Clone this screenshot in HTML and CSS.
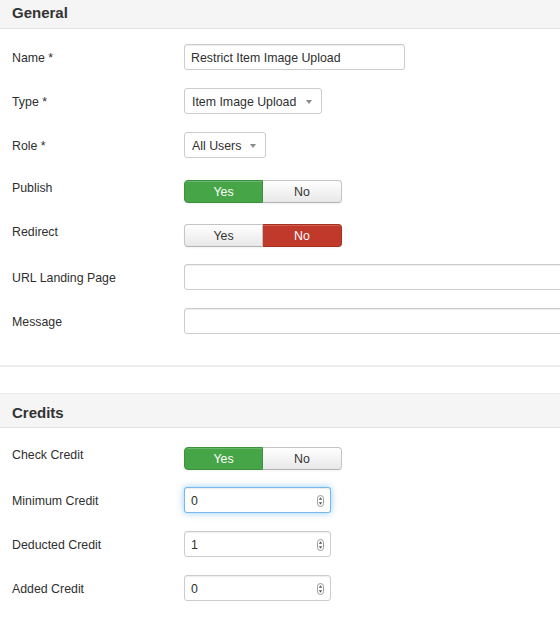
FILE: index.html
```html
<!DOCTYPE html>
<html>
<head>
<meta charset="utf-8">
<link rel="stylesheet" href="styles.css">
</head>
<body>
<div class="page">
  <fieldset class="panel panel-general">
    <div class="legend">General</div>
    <div class="fields">
      <div class="row">
        <label class="label">Name *</label>
        <div class="input input-name"><span class="value">Restrict Item Image Upload</span></div>
      </div>
      <div class="row">
        <label class="label">Type *</label>
        <div class="select select-type"><span class="value">Item Image Upload</span><span class="caret"></span></div>
      </div>
      <div class="row">
        <label class="label">Role *</label>
        <div class="select select-role"><span class="value">All Users</span><span class="caret"></span></div>
      </div>
      <div class="row">
        <label class="label label-btn">Publish</label>
        <div class="btn-group">
          <span class="btn btn-success">Yes</span>
          <span class="btn">No</span>
        </div>
      </div>
      <div class="row">
        <label class="label label-btn">Redirect</label>
        <div class="btn-group">
          <span class="btn">Yes</span>
          <span class="btn btn-danger">No</span>
        </div>
      </div>
      <div class="row">
        <label class="label">URL Landing Page</label>
        <div class="input input-wide"></div>
      </div>
      <div class="row">
        <label class="label">Message</label>
        <div class="input input-wide"></div>
      </div>
    </div>
  </fieldset>

  <fieldset class="panel panel-credits">
    <div class="legend">Credits</div>
    <div class="fields">
      <div class="row">
        <label class="label label-btn">Check Credit</label>
        <div class="btn-group">
          <span class="btn btn-success">Yes</span>
          <span class="btn">No</span>
        </div>
      </div>
      <div class="row">
        <label class="label">Minimum Credit</label>
        <div class="input input-number is-focused"><span class="value">0</span>
          <svg class="spin" width="7" height="12" viewBox="0 0 7 12"><rect x="0.5" y="0.5" width="6" height="11" rx="3" fill="#fff" stroke="#9a9a9a"/><path d="M3.5 2.3 L5.2 4.8 H1.8Z" fill="#555"/><path d="M3.5 9.7 L5.2 7.2 H1.8Z" fill="#555"/></svg>
        </div>
      </div>
      <div class="row">
        <label class="label">Deducted Credit</label>
        <div class="input input-number"><span class="value">1</span>
          <svg class="spin" width="7" height="12" viewBox="0 0 7 12"><rect x="0.5" y="0.5" width="6" height="11" rx="3" fill="#fff" stroke="#9a9a9a"/><path d="M3.5 2.3 L5.2 4.8 H1.8Z" fill="#555"/><path d="M3.5 9.7 L5.2 7.2 H1.8Z" fill="#555"/></svg>
        </div>
      </div>
      <div class="row">
        <label class="label">Added Credit</label>
        <div class="input input-number"><span class="value">0</span>
          <svg class="spin" width="7" height="12" viewBox="0 0 7 12"><rect x="0.5" y="0.5" width="6" height="11" rx="3" fill="#fff" stroke="#9a9a9a"/><path d="M3.5 2.3 L5.2 4.8 H1.8Z" fill="#555"/><path d="M3.5 9.7 L5.2 7.2 H1.8Z" fill="#555"/></svg>
        </div>
      </div>
    </div>
  </fieldset>
</div>
</body>
</html>
```

FILE: styles.css
```css
html, body {
  margin: 0;
  padding: 0;
  background: #fff;
}
body {
  font-family: "Liberation Sans", Arial, Helvetica, sans-serif;
  font-size: 12.35px;
  color: #2f2f2f;
  overflow: hidden;
}
.page {
  width: 560px;
  overflow: hidden;
}
.panel {
  margin: 0;
  padding: 0;
  border: 0;
  min-width: 0;
}
.panel-general {
  margin-top: -6px;
  border-bottom: 2px solid #ececec;
}
.panel-credits {
  margin-top: 26px;
}
.legend {
  height: 34px;
  line-height: 37px;
  padding-left: 12px;
  background: #f5f5f5;
  border-bottom: 1px solid #e2e2e2;
  font-size: 15px;
  font-weight: bold;
  color: #333;
}
.panel-credits .legend {
  border-top: 1px solid #ebebeb;
  height: 33px;
}
.fields {
  padding: 15px 0 13px 12px;
}
.panel-credits .fields {
  padding-bottom: 0;
}
.row {
  display: flex;
  align-items: flex-start;
  height: 44px;
}
.label {
  width: 172px;
  flex: none;
  line-height: 18px;
  padding-top: 5px;
}
.label-btn {
  padding-top: 3px;
}
.input {
  box-sizing: border-box;
  height: 26px;
  border: 1px solid #cccccc;
  border-radius: 3px;
  background: #fff;
  box-shadow: inset 0 1px 1px rgba(0,0,0,0.075);
  display: flex;
  align-items: center;
  padding: 1px 6px 0;
  flex: none;
}
.input-name { width: 221px; }
.input-wide { width: 420px; }
.input-number {
  width: 147px;
  justify-content: space-between;
  padding-right: 6px;
}
.is-focused {
  border-color: rgba(82,168,236,0.8);
  box-shadow: inset 0 1px 1px rgba(0,0,0,0.075), 0 0 7px rgba(82,168,236,0.6);
}
.spin { display: block; }
.select {
  box-sizing: border-box;
  height: 26px;
  border: 1px solid #cccccc;
  border-radius: 3px;
  background: #fff;
  display: flex;
  align-items: center;
  justify-content: space-between;
  padding: 1px 9px 0 7px;
  flex: none;
}
.select-type { width: 138px; }
.select-role { width: 82px; }
.caret {
  width: 0;
  height: 0;
  border-top: 4px solid #8a8a8a;
  border-left: 3px solid transparent;
  border-right: 3px solid transparent;
}
.btn-group {
  display: flex;
  margin-top: 4px;
  flex: none;
}
.btn {
  box-sizing: border-box;
  width: 79px;
  height: 23px;
  line-height: 22px;
  text-align: center;
  color: #333;
  background: linear-gradient(#ffffff, #e8e8e8);
  border: 1px solid #c4c4c4;
  border-bottom-color: #b3b3b3;
  box-shadow: inset 0 1px 0 rgba(255,255,255,0.2), 0 1px 2px rgba(0,0,0,0.05);
}
.btn:first-child {
  border-radius: 4px 0 0 4px;
}
.btn:last-child {
  border-radius: 0 4px 4px 0;
  border-left: 0;
}
.btn-success {
  color: #fff;
  background: #46a546;
  border-color: #3d913d;
}
.btn-danger {
  color: #fff;
  background: #c0392b;
  border-color: #a8301f;
}
```
